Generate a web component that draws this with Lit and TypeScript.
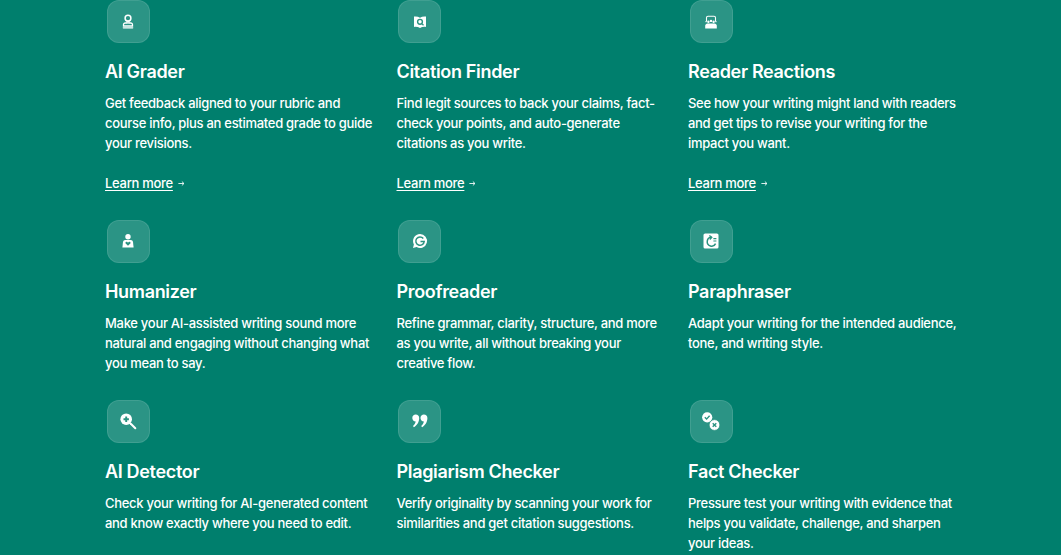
import { LitElement, html, css, svg } from "lit";
import { customElement } from "lit/decorators.js";

const g = "#2a9380";
const icons: Record<string, unknown> = {
  grader: svg`<circle cx="10" cy="6.200" r="2.900" fill="none" stroke="#fff" stroke-width="1.500"/><path d="M9.200 9v2H7.200a1.700 1.700 0 0 0-1.700 1.700v1.300h9v-1.300a1.700 1.700 0 0 0-1.700-1.700H10.800V9" fill="none" stroke="#fff" stroke-width="1.300"/><path d="M5.300 15.800h9.400" stroke="#fff" stroke-width="1.300" stroke-linecap="round"/>`,
  citation: svg`<path d="M4 4.600c2.400-.3 4.400.1 6 1.100 1.600-1 3.600-1.400 6-1.100v10.300c-2.400-.3-4.400.1-6 1-1.600-.9-3.600-1.300-6-1z" fill="#fff"/><circle cx="10" cy="9.800" r="2.400" fill="none" stroke="${g}" stroke-width="1.400"/><path d="M11.800 11.600l1.700 1.700" stroke="${g}" stroke-width="1.300"/>`,
  reader: svg`<path d="M5.500 9.500V5.800A1.500 1.500 0 0 1 7 4.300h6a1.500 1.500 0 0 1 1.500 1.500v3.700" fill="none" stroke="#fff" stroke-width="1.100"/><path d="M4.300 9.700h1.500M14.200 9.700h1.500" stroke="#fff" stroke-width=".9"/><circle cx="7.400" cy="9.700" r="1.200" fill="#fff"/><circle cx="10" cy="8.900" r="1.200" fill="#fff"/><circle cx="12.600" cy="9.700" r="1.200" fill="#fff"/><path d="M4.200 16.600v-2.800c0-1.400 1-2.400 2.300-2.400h7c1.300 0 2.300 1 2.300 2.400v2.800z" fill="#fff"/>`,
  human: svg`<circle cx="10" cy="5.800" r="2.700" fill="#fff"/><path d="M7.200 9h5.600c1.200 0 2 .8 2.200 2l.6 5.600H4.400L5 11c.2-1.200 1-2 2.200-2z" fill="#fff"/><path d="M10 14.800 7.700 12.600c-1-1 .6-2.500 1.600-1.500l.7.700.7-.7c1-1 2.600.5 1.600 1.500z" fill="${g}"/>`,
  proof: svg`<path d="M10 3a7 7 0 1 1-3.400 13.100L3 17l.9-3.600A7 7 0 0 1 10 3z" fill="#fff"/><path d="M13.300 7.500A4.200 4.200 0 1 0 14.200 10.500H10.500" fill="none" stroke="${g}" stroke-width="1.500"/>`,
  para: svg`<rect x="2.500" y="2.500" width="15" height="15" rx="1.600" fill="#fff"/><path d="M10.500 6.300a4.400 4.400 0 1 0 4.100 6.300" fill="none" stroke="${g}" stroke-width="1.500"/><path d="M8.400 4.400 10.800 6.300 8.800 8.500" fill="none" stroke="${g}" stroke-width="1.300"/><path d="M12.400 7.700h3M12.400 10h3" stroke="${g}" stroke-width="1.200"/>`,
  detect: svg`<circle cx="8.200" cy="8.200" r="5.800" fill="#fff"/><path d="M12.500 12.500l4.800 4.800" stroke="#fff" stroke-width="2" stroke-linecap="round"/><path d="M8.200 5.500v5.400M5.500 8.200h5.400" stroke="${g}" stroke-width="1.900"/>`,
  quote: svg`<path d="M5.700 3.600c2.100 0 3.500 1.500 3.500 3.500 0 4-2.200 7.400-5.300 9.200l-.9-1.300c1.500-1.200 2.300-2.500 2.700-4.400C3.700 10.400 2.300 9 2.300 7.100c0-2 1.500-3.500 3.400-3.500z" fill="#fff"/><path d="M13.900 3.600c2.100 0 3.500 1.500 3.500 3.500 0 4-2.200 7.400-5.300 9.200l-.9-1.300c1.500-1.200 2.300-2.500 2.700-4.400-2-.2-3.400-1.600-3.400-3.500 0-2 1.500-3.500 3.400-3.500z" fill="#fff"/>`,
  fact: svg`<circle cx="6.200" cy="6.300" r="5.100" fill="#fff"/><path d="M3.800 6.300l1.800 1.800 3-3.300" fill="none" stroke="${g}" stroke-width="1.400"/><circle cx="13.500" cy="14" r="5.400" fill="#fff" stroke="${g}" stroke-width=".8"/><path d="M11.700 12.200l3.600 3.600M15.300 12.200l-3.600 3.600" stroke="${g}" stroke-width="1.400"/>`,
};

type Tool = { icon: string; title: string; lines: string[]; link?: boolean };
const tools: Tool[] = [
  { icon: "grader", title: "AI Grader", lines: ["Get feedback aligned to your rubric and", "course info, plus an estimated grade to guide", "your revisions."], link: true },
  { icon: "citation", title: "Citation Finder", lines: ["Find legit sources to back your claims, fact-", "check your points, and auto-generate", "citations as you write."], link: true },
  { icon: "reader", title: "Reader Reactions", lines: ["See how your writing might land with readers", "and get tips to revise your writing for the", "impact you want."], link: true },
  { icon: "human", title: "Humanizer", lines: ["Make your AI-assisted writing sound more", "natural and engaging without changing what", "you mean to say."] },
  { icon: "proof", title: "Proofreader", lines: ["Refine grammar, clarity, structure, and more", "as you write, all without breaking your", "creative flow."] },
  { icon: "para", title: "Paraphraser", lines: ["Adapt your writing for the intended audience,", "tone, and writing style."] },
  { icon: "detect", title: "AI Detector", lines: ["Check your writing for AI-generated content", "and know exactly where you need to edit."] },
  { icon: "quote", title: "Plagiarism Checker", lines: ["Verify originality by scanning your work for", "similarities and get citation suggestions."] },
  { icon: "fact", title: "Fact Checker", lines: ["Pressure test your writing with evidence that", "helps you validate, challenge, and sharpen", "your ideas."] },
];

@customElement("app-root")
export class AppRoot extends LitElement {
  static styles = css`
    :host { display: block; height: 555px; overflow: hidden; background: #007f6d; color: #fff; font-family: Inter, "Liberation Sans", sans-serif; }
    .grid { display: grid; grid-template-columns: repeat(3, 291.5px); row-gap: 26.8px; padding-left: 105px; }
    .card { display: flex; flex-direction: column; align-items: flex-start; }
    .icon { box-sizing: border-box; width: 43px; height: 43px; margin-left: 1.6px; border-radius: 12px; background: rgba(255,255,255,.17); border: 1px solid rgba(255,255,255,.1); display: flex; align-items: center; justify-content: center; }
    .icon svg { width: 20px; height: 20px; display: block; overflow: visible; }
    h3 { margin: 17px 0 0; font-size: 18px; line-height: 24px; font-weight: 600; letter-spacing: -0.33px; }
    p { margin: 9px 0 0; font-size: 13px; line-height: 20px; white-space: nowrap; letter-spacing: -0.29px; font-weight: 500; }
    p span { display: block; }
    .more { margin-top: 20px; font-size: 13px; line-height: 20px; font-weight: 500; letter-spacing: -0.29px; display: flex; align-items: center; gap: 5px; }
    .more a { color: #fff; text-decoration: underline; text-underline-offset: 2px; }
    .more svg { width: 7px; height: 7px; display: block; }
  `;
  render() {
    return html`<div class="grid">${tools.map(t => html`
      <div class="card">
        <div class="icon"><svg viewBox="0 0 20 20">${icons[t.icon]}</svg></div>
        <h3>${t.title}</h3>
        <p>${t.lines.map(l => html`<span>${l}</span>`)}</p>
        ${t.link ? html`<div class="more"><a>Learn more</a><svg viewBox="0 0 9 8"><path d="M.5 4h7M5 1.500 7.700 4 5 6.500" fill="none" stroke="#fff" stroke-width="1.100"/></svg></div>` : ""}
      </div>`)}</div>`;
  }
}
